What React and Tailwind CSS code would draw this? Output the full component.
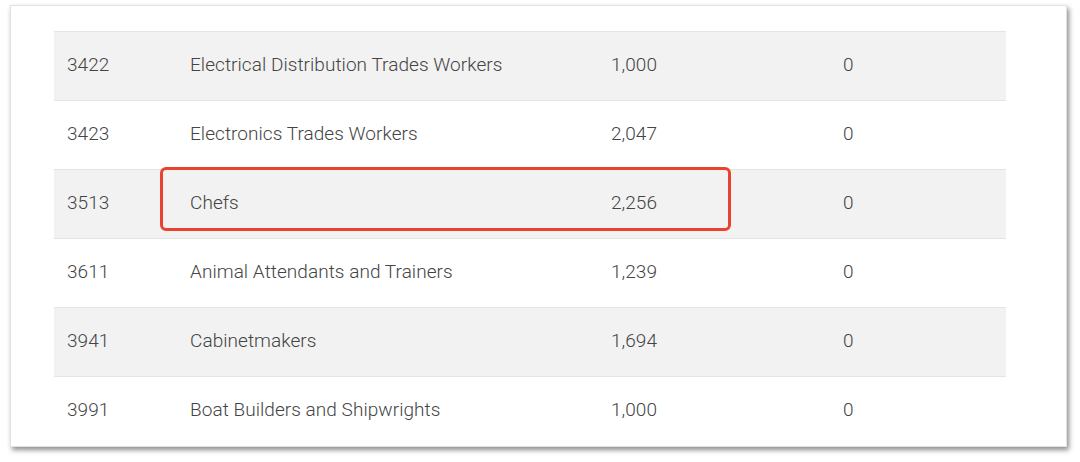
export default function App() {
  const rows = [
    ["3422", "Electrical Distribution Trades Workers", "1,000", "0"],
    ["3423", "Electronics Trades Workers", "2,047", "0"],
    ["3513", "Chefs", "2,256", "0"],
    ["3611", "Animal Attendants and Trainers", "1,239", "0"],
    ["3941", "Cabinetmakers", "1,694", "0"],
    ["3991", "Boat Builders and Shipwrights", "1,000", "0"],
  ];
  return (
    <div className="w-[1080px] h-[462px] bg-white pt-[5px] pl-[10px]" style={{ fontFamily: "Roboto, 'Liberation Sans', sans-serif" }}>
      <div className="w-[1057px] h-[442px] bg-white border border-[#e2e2e2] shadow-[2px_3px_5px_rgba(0,0,0,0.45)] pt-[25px] pl-[43px]">
        <div className="relative w-[952px]">
          {rows.map((r, i) => (
            <div
              key={r[0]}
              className={`flex items-center h-[69px] border-t border-[#e4e4e4] pl-[13px] pb-[1px] text-[19px] tracking-[0.05px] font-light text-[#444] ${i % 2 === 0 ? "bg-[#f2f2f2]" : "bg-white"}`}
            >
              <div className="w-[123px]">{r[0]}</div>
              <div className="w-[421px]">{r[1]}</div>
              <div className="w-[232px]">{r[2]}</div>
              <div>{r[3]}</div>
            </div>
          ))}
          <div className="absolute left-[106px] top-[136px] w-[571px] h-[64px] border-[3px] border-[#e8432e] rounded-[6px]" />
        </div>
      </div>
    </div>
  );
}
